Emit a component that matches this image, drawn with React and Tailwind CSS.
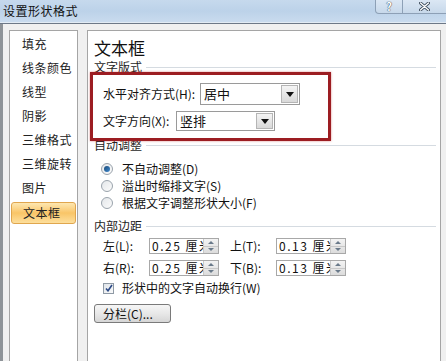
import React from "react";

const font = { fontFamily: '"Noto Sans CJK SC", "Noto Sans", sans-serif' };

function SectionLabel({ children, className = "" }) {
  return (
    <div className={"flex items-center h-[14px] pr-[4px] " + className}>
      <span className="text-[12px] leading-[14px] text-[#1e1e1e] whitespace-nowrap">{children}</span>
      <div className="flex-1 h-px bg-[#d5dbe1] ml-[4px]" />
    </div>
  );
}

function Select({ value, width }) {
  return (
    <div className={"h-full flex items-center border border-[#9a9a9a] bg-white " + width}>
      <span className="flex-1 pl-[3px] text-[13px] leading-[18px] text-[#111]">{value}</span>
      <div className="w-[17px] h-[calc(100%-2px)] mr-[1px] flex items-center justify-center bg-gradient-to-b from-[#f4f4f4] to-[#d9d9d9] border border-[#b5b5b5]">
        <svg width="8" height="5" viewBox="0 0 8 5"><path d="M0 0h8L4 5z" fill="#111" /></svg>
      </div>
    </div>
  );
}

function Spin({ value }) {
  return (
    <div className="w-[70px] h-full flex border border-[#a8a8a8] bg-white">
      <div className="flex-1 overflow-hidden whitespace-nowrap pl-[2px] text-[12px] leading-[14px] text-[#111] tracking-[1.5px]">{value}</div>
      <div className="w-[15px] flex flex-col border-l border-[#c8c8c8] bg-gradient-to-b from-[#f3f3f3] to-[#dcdcdc]">
        <div className="flex-1 flex items-center justify-center border-b border-[#c8c8c8]">
          <svg width="6" height="3" viewBox="0 0 6 3"><path d="M0 3h6L3 0z" fill="#6a7a8a" /></svg>
        </div>
        <div className="flex-1 flex items-center justify-center">
          <svg width="6" height="3" viewBox="0 0 6 3"><path d="M0 0h6L3 3z" fill="#6a7a8a" /></svg>
        </div>
      </div>
    </div>
  );
}

function Radio({ checked, label }) {
  return (
    <div className="h-[17px] flex items-center pl-[7px]">
      <div className="w-[12px] h-[12px] rounded-full border border-[#9aa3ac] bg-gradient-to-br from-[#e4e7ea] to-[#fbfbfb] flex items-center justify-center">
        {checked && <div className="w-[6px] h-[6px] rounded-full bg-gradient-to-br from-[#1a4a78] to-[#3f8ad0]" />}
      </div>
      <span className="ml-[9px] text-[12px] leading-[14px] text-[#111] whitespace-nowrap">{label}</span>
    </div>
  );
}

const navItems = ["填充", "线条颜色", "线型", "阴影", "三维格式", "三维旋转", "图片", "文本框"];

export default function App() {
  return (
    <div className="relative w-[446px] h-[361px] overflow-hidden flex flex-col bg-[#f0f0f0]" style={font}>
      {/* title bar */}
      <div className="h-[22px] flex justify-between bg-gradient-to-b from-[#c6d9ed] via-[#bcd2e9] to-[#c9dbee]">
        <span className="pl-[3px] pt-[3px] text-[12px] leading-[16px] text-[#111] tracking-[0.5px]">设置形状格式</span>
        <div className="flex items-start">
          <div className="w-[28px] h-[14px] border border-t-0 border-[#8da0b6] rounded-bl-[4px] bg-gradient-to-b from-[#dbe7f4] to-[#c7d8ea] flex items-center justify-center">
            <span className="text-[11px] leading-[13px] font-bold text-white [text-shadow:0_0_1px_#2a3a4a,0_0_1px_#2a3a4a]">?</span>
          </div>
          <div className="w-[43px] h-[14px] border-b border-[#8da0b6] bg-gradient-to-b from-[#dbe7f4] to-[#c7d8ea] flex items-center justify-center">
            <svg width="11" height="9" viewBox="0 0 11 9">
              <path d="M1.5 1L9.5 8M9.5 1L1.5 8" stroke="#3a4a5a" strokeWidth="3" strokeLinecap="round" />
              <path d="M1.5 1L9.5 8M9.5 1L1.5 8" stroke="#ffffff" strokeWidth="1.4" strokeLinecap="round" />
            </svg>
          </div>
        </div>
      </div>
      <div className="h-px bg-[#e2ebf4]" />
      <div className="h-px bg-[#6d7887]" />
      {/* body */}
      <div className="flex-1 flex border-l-[3px] border-[#8e9398] pt-[6px]">
        {/* nav */}
        <div className="ml-[6px] w-[69px] bg-white border border-b-0 border-[#a5a5a5] pt-px flex flex-col">
          {navItems.map((t) =>
            t === "文本框" ? (
              <div key={t} className="h-[24px] flex items-center">
                <div className="mx-px mt-[2px] w-full h-[22px] rounded-[3px] border border-[#e0a64e] bg-gradient-to-b from-[#fde7b0] via-[#f9c567] to-[#fddf9c] flex items-center pl-[11px] text-[12px] leading-[16px] text-[#222] tracking-[0.5px]">
                  {t}
                </div>
              </div>
            ) : (
              <div key={t} className="h-[24px] flex items-center pl-[12px] text-[12px] leading-[16px] text-[#222] tracking-[0.5px]">
                {t}
              </div>
            )
          )}
        </div>
        {/* content */}
        <div className="ml-[9px] w-[354px] bg-white border border-b-0 border-[#a5a5a5] pl-[6px] flex flex-col">
          <div className="mt-[7px] h-[20px] text-[17px] leading-[20px] text-[#111]">文本框</div>
          <SectionLabel className="mt-[2px]">文字版式</SectionLabel>
          <div className="pl-[9px]">
            <div className="mt-[9px] h-[22px] flex items-center">
              <span className="w-[97px] text-[12px] leading-[14px] text-[#111] whitespace-nowrap">水平对齐方式(H):</span>
              <Select value="居中" width="w-[100px]" />
            </div>
            <div className="mt-[6px] h-[20px] flex items-center">
              <span className="w-[73px] text-[12px] leading-[14px] text-[#111] whitespace-nowrap">文字方向(X):</span>
              <Select value="竖排" width="w-[99px]" />
            </div>
          </div>
          <SectionLabel className="mt-[7px]">自动调整</SectionLabel>
          <div className="mt-[8px]">
            <Radio checked label="不自动调整(D)" />
            <Radio label="溢出时缩排文字(S)" />
            <Radio label="根据文字调整形状大小(F)" />
          </div>
          <SectionLabel className="mt-[8px]">内部边距</SectionLabel>
          <div className="pl-[9px]">
            <div className="mt-[5px] h-[16px] flex items-center">
              <span className="w-[46px] text-[12px] leading-[14px] text-[#111]">左(L):</span>
              <Spin value="0.25 厘米" />
              <span className="ml-[11px] w-[46px] text-[12px] leading-[14px] text-[#111]">上(T):</span>
              <Spin value="0.13 厘米" />
            </div>
            <div className="mt-[6px] h-[16px] flex items-center">
              <span className="w-[46px] text-[12px] leading-[14px] text-[#111]">右(R):</span>
              <Spin value="0.25 厘米" />
              <span className="ml-[11px] w-[46px] text-[12px] leading-[14px] text-[#111]">下(B):</span>
              <Spin value="0.13 厘米" />
            </div>
            <div className="mt-[5px] h-[14px] flex items-center">
              <div className="w-[11px] h-[11px] border border-[#8f9aa5] bg-gradient-to-br from-[#dfe4e9] to-[#fafafa] flex items-center justify-center">
                <svg width="8" height="8" viewBox="0 0 8 8"><path d="M1 4.5L3 6.8L7 1" stroke="#2c4a86" strokeWidth="1.6" fill="none" /></svg>
              </div>
              <span className="ml-[8px] text-[12px] leading-[14px] text-[#111]">形状中的文字自动换行(W)</span>
            </div>
          </div>
          <div className="mt-[9px] w-[77px] h-[19px] rounded-[3px] border border-[#7a7a7a] bg-gradient-to-b from-[#f6f6f6] via-[#e8e8e8] to-[#d6d6d6] flex items-center pl-[8px] text-[12px] leading-[14px] text-[#111]">
            分栏(C)...
          </div>
        </div>
      </div>
      {/* red annotation box */}
      <div className="absolute left-[90px] top-[72px] w-[241px] h-[69px] border-[3px] border-[#9c1d22] shadow-[0_0_2px_rgba(200,60,60,0.6)]" />
    </div>
  );
}
